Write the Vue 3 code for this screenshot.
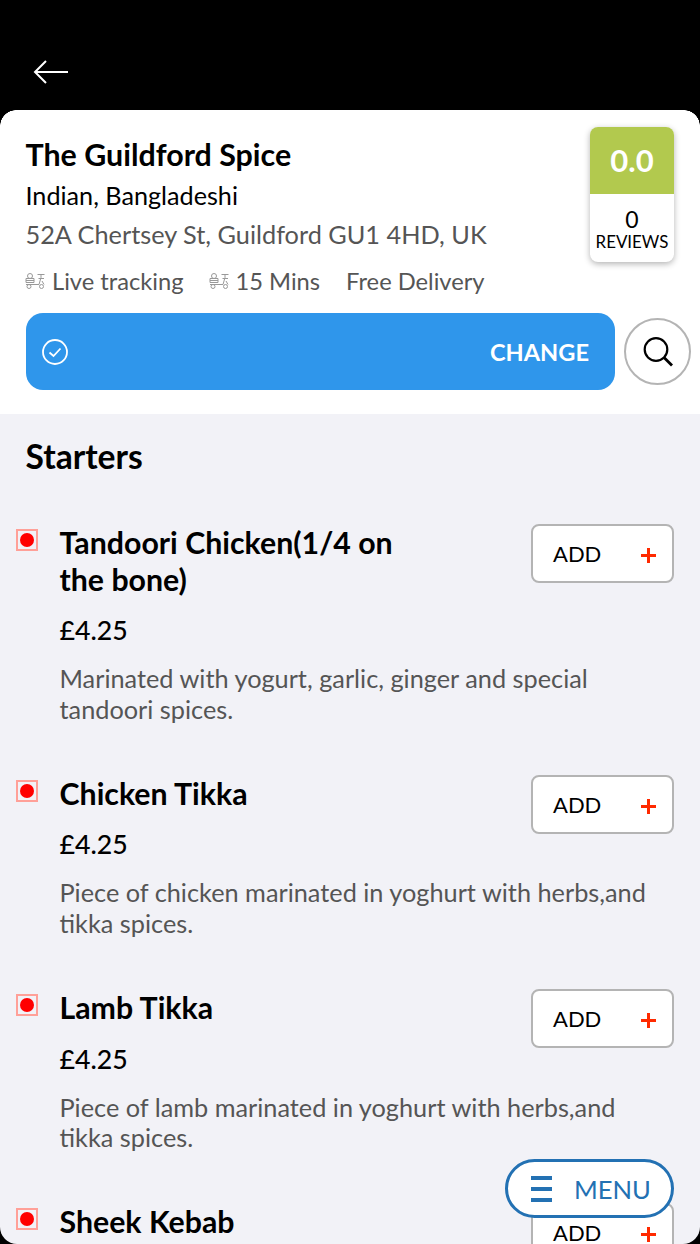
<template>
  <div class="screen">
    <div class="topbar">
      <svg class="back" width="36" height="26" viewBox="0 0 36 26" fill="none" stroke="#fff" stroke-width="2">
        <path d="M35 13H2M13 2 2 13l11 11" />
      </svg>
    </div>

    <div class="info-card">
      <div class="info-row">
        <div class="info-text">
          <h1 class="name">The Guildford Spice</h1>
          <p class="cuisine">Indian, Bangladeshi</p>
          <p class="address">52A Chertsey St, Guildford GU1 4HD, UK</p>
          <div class="facts">
            <span class="fact">
              <svg width="20" height="16" viewBox="0 0 20 16" fill="none" stroke="#999" stroke-width="1">
                <circle cx="5" cy="3" r="2.5" />
                <path d="M1 5.5h8v4H1zM1 7.5h8M1 11.5h13M12.5 1.5h7M16 1.5v3l-2 7M13.5 5.5h5.5M17 8l2 3.5" />
                <circle cx="4" cy="13.5" r="2" />
                <circle cx="16.5" cy="13.5" r="2" />
              </svg>
              Live tracking
            </span>
            <span class="fact">
              <svg width="20" height="16" viewBox="0 0 20 16" fill="none" stroke="#999" stroke-width="1">
                <circle cx="5" cy="3" r="2.5" />
                <path d="M1 5.5h8v4H1zM1 7.5h8M1 11.5h13M12.5 1.5h7M16 1.5v3l-2 7M13.5 5.5h5.5M17 8l2 3.5" />
                <circle cx="4" cy="13.5" r="2" />
                <circle cx="16.5" cy="13.5" r="2" />
              </svg>
              15 Mins
            </span>
            <span class="fact">Free Delivery</span>
          </div>
        </div>
        <div class="rating">
          <div class="score">0.0</div>
          <div class="reviews">
            <span class="count">0</span>
            <span class="label">REVIEWS</span>
          </div>
        </div>
      </div>

      <div class="action-row">
        <div class="change-bar">
          <svg width="26" height="26" viewBox="0 0 26 26" fill="none" stroke="#fff">
            <circle cx="13" cy="13" r="12" stroke-width="1.8" />
            <path d="M7.5 13.5l4 3.5 7-7.5" stroke-width="1.8" />
          </svg>
          <span class="change">CHANGE</span>
        </div>
        <button class="search">
          <svg width="32" height="32" viewBox="0 0 32 32" fill="none" stroke="#000">
            <circle cx="14" cy="13.5" r="11.3" stroke-width="2.2" />
            <path d="M22 21.5l8 8" stroke-width="2.8" />
          </svg>
        </button>
      </div>
    </div>

    <div class="menu-list">
      <h2 class="section">Starters</h2>
      <div v-for="item in items" :key="item.name" class="item">
        <span class="veg"><i></i></span>
        <div class="item-body">
          <div class="item-title">{{ item.name }}</div>
          <div v-if="item.price" class="price">{{ item.price }}</div>
          <div v-if="item.desc" class="desc">{{ item.desc }}</div>
        </div>
        <button class="add">ADD<span class="plus"></span></button>
      </div>
    </div>

    <button class="menu-btn">
      <span class="burger"><i></i><i></i><i></i></span>
      MENU
    </button>
  </div>
</template>

<script setup>
const items = [
  {
    name: 'Tandoori Chicken(1/4 on the bone)',
    price: '£4.25',
    desc: 'Marinated with yogurt, garlic, ginger and special tandoori spices.'
  },
  {
    name: 'Chicken Tikka',
    price: '£4.25',
    desc: 'Piece of chicken marinated in yoghurt with herbs,and tikka spices.'
  },
  {
    name: 'Lamb Tikka',
    price: '£4.25',
    desc: 'Piece of lamb marinated in yoghurt with herbs,and tikka spices.'
  },
  // the rest of this one is below the fold
  { name: 'Sheek Kebab' }
]
</script>

<style>
body {
  background: #000;
}
</style>

<style scoped>
.screen {
  position: relative;
  width: 700px;
  height: 1244px;
  overflow: hidden;
  background: #f2f2f7;
  border-radius: 0 0 17px 17px;
  font-family: Lato, sans-serif;
  color: #000;
}
.topbar {
  height: 110px;
  background: #000;
  padding: 59px 0 0 33px;
  box-sizing: border-box;
}
.back {
  display: block;
}

/* restaurant card */
.info-card {
  position: relative;
  background: #fff;
  height: 304px;
  padding: 17px 26px 0 25.5px;
  box-sizing: border-box;
}
.info-card::before,
.info-card::after {
  content: '';
  position: absolute;
  top: 0;
  width: 16px;
  height: 16px;
}
.info-card::before {
  left: 0;
  background: radial-gradient(circle at 100% 100%, transparent 15.5px, #000 16px);
}
.info-card::after {
  right: 0;
  background: radial-gradient(circle at 0 100%, transparent 15.5px, #000 16px);
}
.info-row {
  display: flex;
  justify-content: space-between;
  height: 186px;
}
.name {
  margin: 9px 0 0;
  font-size: 30.4px;
  line-height: 36px;
  font-weight: 700;
}
.cuisine {
  margin: 7px 0 0;
  font-size: 25.2px;
  line-height: 32px;
}
.address {
  margin: 7px 0 0;
  font-size: 25.3px;
  line-height: 32px;
  color: #555;
}
.facts {
  display: flex;
  gap: 26px;
  margin: 15px 0 0 -0.5px;
  font-size: 23.7px;
  line-height: 32px;
  color: #555;
}
.fact {
  display: flex;
  align-items: center;
  gap: 7px;
}
.fact + .fact:not(:last-child) {
  margin-left: -1px;
}
.rating {
  width: 84px;
  height: 135px;
  border-radius: 8px;
  overflow: hidden;
  background: #fff;
  box-shadow: 0 2px 6px rgba(0, 0, 0, 0.3);
}
.score {
  height: 67px;
  background: #b2c94e;
  color: #fff;
  font-size: 31px;
  font-weight: 700;
  line-height: 66px;
  text-align: center;
}
.reviews {
  text-align: center;
  padding-top: 13px;
}
.count {
  display: block;
  font-size: 23px;
  line-height: 24px;
}
.label {
  display: block;
  font-size: 16.9px;
  line-height: 21px;
}
.action-row {
  display: flex;
  align-items: center;
  margin-right: -17px;
  gap: 9px;
}
.change-bar {
  flex: 1;
  height: 77px;
  background: #2f96eb;
  border-radius: 17px;
  display: flex;
  align-items: center;
  justify-content: space-between;
  padding: 0 26px 0 16px;
}
.change {
  color: #fff;
  font-size: 23.6px;
  font-weight: 700;
}
.search {
  width: 67px;
  height: 67px;
  border-radius: 50%;
  border: 2px solid #b4b4b4;
  background: #fff;
  padding: 0;
  display: flex;
  align-items: center;
  justify-content: center;
}

/* dishes */
.section {
  margin: 0;
  padding: 23px 0 0 25.5px;
  font-size: 33.6px;
  line-height: 38px;
  font-weight: 700;
}
.item {
  position: relative;
  display: flex;
  padding: 0 26px 0 16px;
  margin-bottom: 55.5px;
}
.section + .item {
  margin-top: 54px;
}
.veg {
  flex: none;
  width: 22px;
  height: 22px;
  border: 2px solid #ffa098;
  box-sizing: border-box;
  display: flex;
  align-items: center;
  justify-content: center;
}
.veg i {
  width: 14px;
  height: 14px;
  border-radius: 50%;
  background: #f00;
}
.item-body {
  flex: 1;
  padding-left: 21.5px;
  min-width: 0;
}
.item-title {
  max-width: 360px;
  font-size: 30.3px;
  font-weight: 700;
  line-height: 37px;
  margin-top: -5px;
}
.price {
  font-size: 26.7px;
  font-weight: 500;
  line-height: 34px;
  margin-top: 15.4px;
}
.desc {
  max-width: 600px;
  font-size: 25.3px;
  line-height: 30.6px;
  color: #555;
  margin-top: 16px;
}
.add {
  position: absolute;
  top: -5px;
  right: 26px;
  width: 143px;
  height: 59px;
  border: 2px solid #b4b4b4;
  border-radius: 8px;
  background: #fff;
  font-family: inherit;
  font-size: 22px;
  color: #000;
  text-align: left;
  padding: 0 0 0 20px;
}
.plus {
  position: absolute;
  right: 16px;
  top: 22px;
  width: 15px;
  height: 15px;
  background:
    linear-gradient(#ff2a00, #ff2a00) center / 15px 3px no-repeat,
    linear-gradient(#ff2a00, #ff2a00) center / 3px 15px no-repeat;
}

.menu-btn {
  position: absolute;
  left: 505px;
  top: 1159px;
  width: 169px;
  height: 59px;
  border: 3px solid #2371b3;
  border-radius: 30px;
  background: #fff;
  box-sizing: border-box;
  color: #2371b3;
  font-family: inherit;
  font-size: 25.6px;
  padding: 0 0 0 23px;
  display: flex;
  align-items: center;
  gap: 22px;
}
.burger {
  display: flex;
  flex-direction: column;
  gap: 7px;
}
.burger i {
  display: block;
  width: 21px;
  height: 4px;
  background: #2371b3;
}
</style>
